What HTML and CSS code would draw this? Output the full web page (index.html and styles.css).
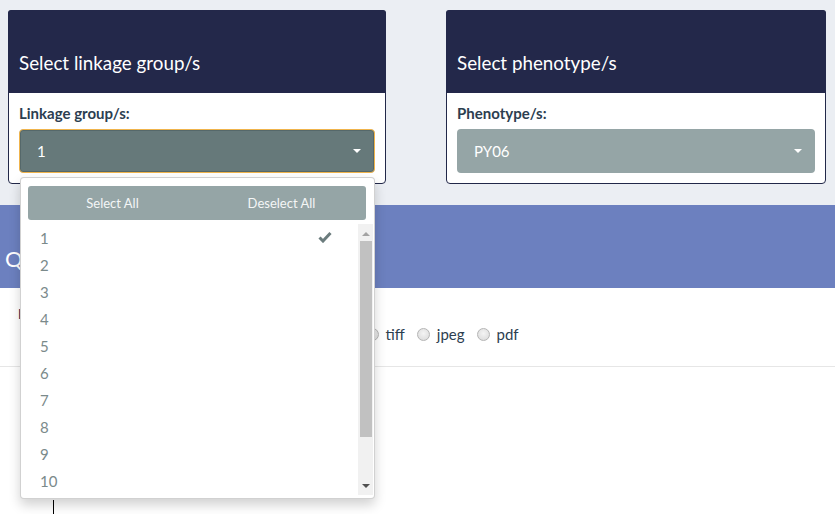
FILE: index.html
```html
<!DOCTYPE html>
<html>
<head>
<meta charset="utf-8">
<link rel="stylesheet" href="styles.css">
</head>
<body>
<div class="top">
  <div class="card card-lg">
    <div class="card-head"><h3>Select linkage group/s</h3></div>
    <div class="card-body">
      <label class="lbl">Linkage group/s:</label>
      <div class="picker">
        <div class="select focused"><span>1</span><span class="caret"></span></div>
        <div class="menu">
          <div class="actions"><span>Select All</span><span>Deselect All</span></div>
          <div class="listwrap">
            <ul class="items">
              <li><span>1</span><svg class="check" width="14" height="12" viewBox="0 0 14 12"><path d="M1.5 6.5 L5 10 L12.5 2" fill="none" stroke="#6b7c7d" stroke-width="3"/></svg></li>
              <li><span>2</span></li>
              <li><span>3</span></li>
              <li><span>4</span></li>
              <li><span>5</span></li>
              <li><span>6</span></li>
              <li><span>7</span></li>
              <li><span>8</span></li>
              <li><span>9</span></li>
              <li><span>10</span></li>
            </ul>
            <div class="sbar">
              <span class="arr up"></span>
              <span class="thumb"></span>
              <span class="fill"></span>
              <span class="arr down"></span>
            </div>
          </div>
        </div>
      </div>
    </div>
  </div>
  <div class="card card-rg">
    <div class="card-head"><h3>Select phenotype/s</h3></div>
    <div class="card-body">
      <label class="lbl">Phenotype/s:</label>
      <div class="picker">
        <div class="select"><span>PY06</span><span class="caret"></span></div>
      </div>
    </div>
  </div>
</div>
<div class="band"><h2>QTL plot</h2></div>
<div class="content">
  <div class="format">
    <div class="flabel">Download format:</div>
    <div class="radios">
      <span class="radio checked"></span><span class="rtxt">png</span>
      <span class="radio"></span><span class="rtxt">tiff</span>
      <span class="radio"></span><span class="rtxt">jpeg</span>
      <span class="radio"></span><span class="rtxt">pdf</span>
    </div>
  </div>
  <div class="rule"></div>
  <div class="plot"><div class="axis"></div></div>
</div>
</body>
</html>
```
FILE: styles.css
```css
* { box-sizing: border-box; }
html, body { margin: 0; padding: 0; }
body {
  width: 835px;
  height: 514px;
  overflow: hidden;
  font-family: Lato, "Open Sans", sans-serif;
  background: #ffffff;
  color: #2c3e50;
}
.top {
  background: #ebeef3;
  display: flex;
  padding: 10px 0 21px 8px;
  gap: 60px;
}
.card {
  background: #fff;
  border: 1px solid #222849;
  border-radius: 4px;
}
.card-lg { width: 378px; }
.card-rg { width: 380px; }
.card-head {
  background: #23284a;
  border-radius: 3px 3px 0 0;
  margin: -1px -1px 0;
  padding: 42px 11px 19px;
}
.card-head h3 {
  margin: 0;
  font-size: 18.8px;
  line-height: 22px;
  font-weight: 400;
  color: #fff;
}
.card-body {
  padding: 10px 10px 10px;
}
.lbl {
  display: block;
  font-weight: 700;
  font-size: 15px;
  line-height: 21px;
  margin-bottom: 5px;
  color: #2c3e50;
}
.picker { position: relative; }
.select {
  height: 44px;
  background: #95a5a6;
  border-radius: 4px;
  display: flex;
  align-items: center;
  justify-content: space-between;
  padding: 0 13px 0 17px;
  color: #fff;
  font-size: 15px;
}
.select.focused {
  background: #66797a;
  border: 1px solid #f0b44c;
  box-shadow: inset 0 0 0 1px #55686a;
  padding-left: 17px;
}
.caret {
  width: 0; height: 0;
  border-left: 4px solid transparent;
  border-right: 4px solid transparent;
  border-top: 4px solid #fff;
}
.menu {
  position: absolute;
  top: 48px;
  left: 1px;
  width: 355px;
  height: 322px;
  background: #fff;
  border: 1px solid rgba(0,0,0,0.18);
  border-radius: 4px;
  box-shadow: 0 6px 12px rgba(0,0,0,0.18);
  padding-top: 8px;
  z-index: 10;
}
.actions {
  margin: 0 8px 4px 7px;
  height: 34px;
  background: #95a5a6;
  border-radius: 3px;
  display: grid;
  grid-template-columns: 1fr 1fr;
  align-items: center;
  text-align: center;
  color: #f4f6f6;
  font-size: 13px;
}
.listwrap {
  display: flex;
  height: 271px;
  margin-right: 1px;
}
.items {
  list-style: none;
  margin: 0;
  padding: 0;
  flex: 1;
  overflow: hidden;
}
.items li {
  height: 27px;
  display: flex;
  align-items: center;
  justify-content: space-between;
  padding: 0 26px 0 19px;
  font-size: 15px;
  color: #7b8a8b;
}
.check { margin-top: -2px; }
.sbar {
  width: 15px;
  background: #f1f1f1;
  display: flex;
  flex-direction: column;
  align-items: center;
  padding: 2px 0 1px;
}
.arr {
  width: 0; height: 0;
  border-left: 4px solid transparent;
  border-right: 4px solid transparent;
  margin: 6px 0 5px;
}
.arr.up { border-bottom: 4px solid #a3a3a3; }
.arr.down { border-top: 4px solid #505050; margin: 5px 0 6px; }
.thumb {
  width: 12px;
  height: 196px;
  background: #c1c1c1;
}
.fill { flex: 1; }
.band {
  background: #6c80bf;
  height: 83px;
  padding: 42px 0 0 5px;
}
.band h2 {
  margin: 0;
  color: #fff;
  font-size: 22px;
  line-height: 24px;
  font-weight: 400;
}
.content { position: relative; }
.format {
  padding: 16px 0 0 18px;
}
.flabel {
  font-weight: 700;
  font-size: 14px;
  line-height: 20px;
  color: #3b2f5e;
}
.radios {
  display: flex;
  align-items: center;
  height: 20px;
  padding-left: 291px;
  font-size: 15px;
  color: #2c3e50;
}
.radio {
  flex: none;
  width: 13px;
  height: 13px;
  border-radius: 50%;
  border: 1px solid #b5b5b5;
  background: radial-gradient(circle at 50% 40%, #f4f4f4, #d8d8d8);
  margin-right: 7px;
}
.radio.checked {
  background: radial-gradient(circle, #3b2f5e 35%, #e8e8e8 40%);
}
.rtxt { margin-right: 12px; }
.rule {
  height: 1px;
  background: #e6e6e6;
  margin: 22px 0 0 0;
}
.plot {
  height: 150px;
  position: relative;
}
.axis {
  position: absolute;
  left: 53px;
  top: 133px;
  width: 1px;
  height: 20px;
  background: #000;
}
```
